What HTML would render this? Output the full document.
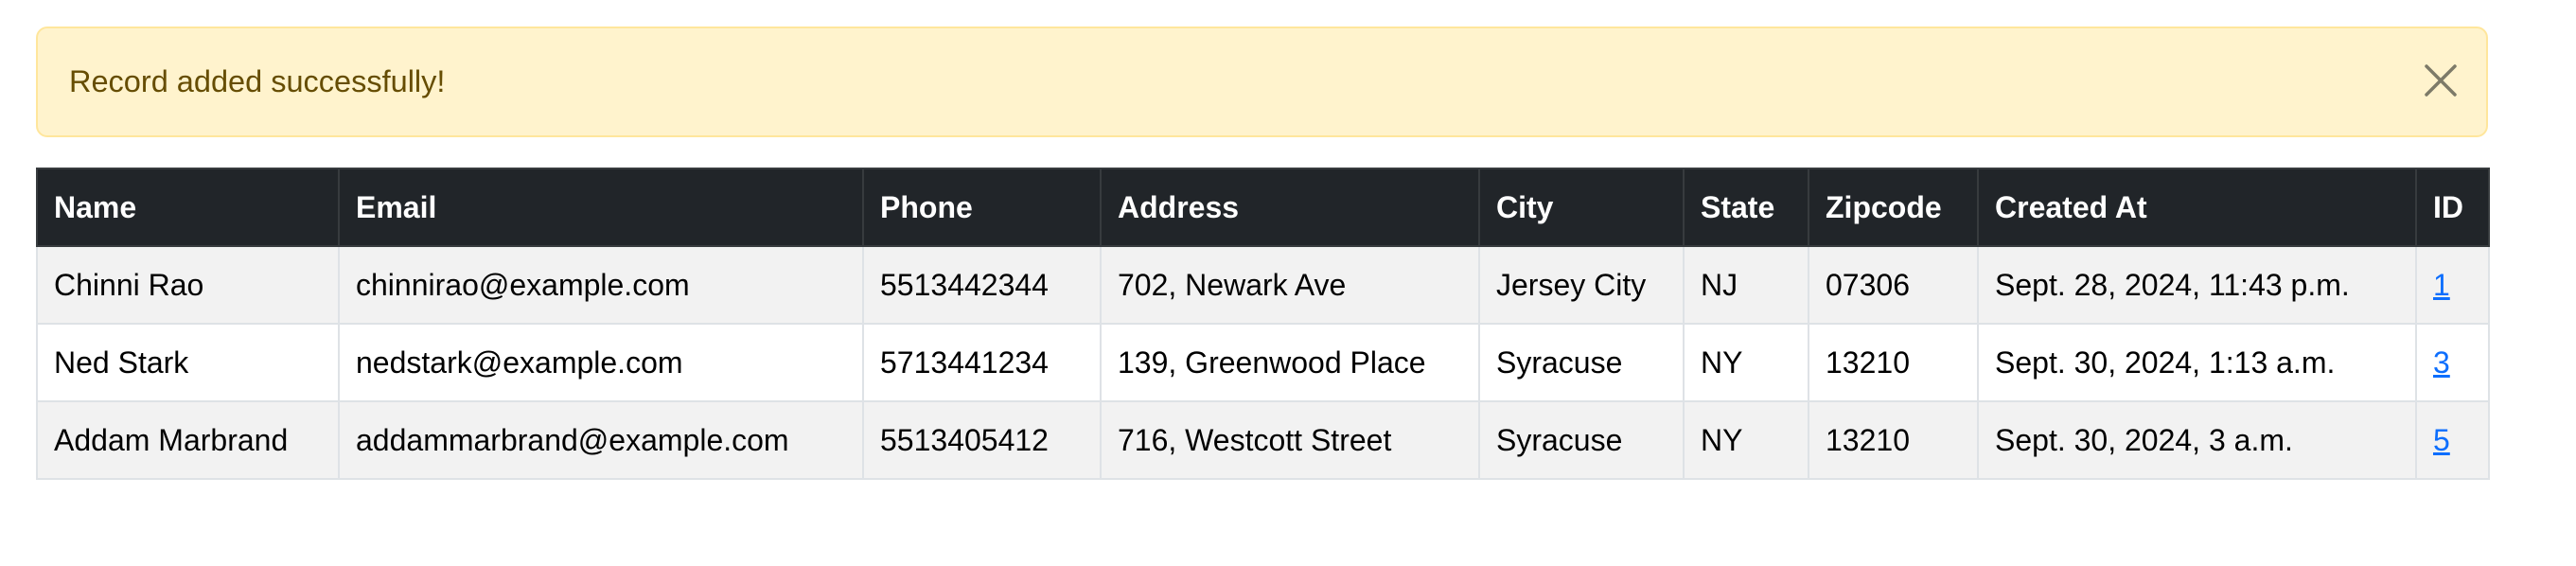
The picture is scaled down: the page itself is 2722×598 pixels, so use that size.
<!DOCTYPE html>
<html><head><meta charset="utf-8"><style>
html,body{margin:0;padding:0;background:#fff;width:2722px;height:598px;overflow:hidden;font-family:"Liberation Sans",sans-serif;}
.alert{position:absolute;left:38px;top:28px;height:113px;background:#fff3cd;border:2px solid #ffe69c;border-radius:12px;box-sizing:content-box;width:2587px;}
.alert span{position:absolute;left:33px;top:0;line-height:113px;font-size:32.5px;color:#664d03;}
.alert svg{position:absolute;left:2522px;top:38px;}
table{position:absolute;left:38px;top:177px;border-collapse:collapse;table-layout:fixed;width:2591px;font-size:32px;}
td,th{height:80px;padding:0 0 0 17px;text-align:left;border:2px solid #dee2e6;white-space:nowrap;overflow:hidden;}
th{background:#212529;color:#fff;font-weight:bold;border-color:#373b3e;}
tr.s td{background:#f2f2f2;}
a{color:#0d6efd;text-decoration:underline;}
</style></head><body>
<div class="alert"><span>Record added successfully!</span>
<svg width="34" height="34" viewBox="0 0 34 34"><path d="M2 2L32 32M32 2L2 32" stroke="#7d7a68" stroke-width="3.5" stroke-linecap="round"/></svg></div>
<table>
<colgroup><col style="width:319px"><col style="width:554px"><col style="width:251px"><col style="width:400px"><col style="width:216px"><col style="width:132px"><col style="width:179px"><col style="width:463px"><col style="width:77px"></colgroup>
<tr><th>Name</th><th>Email</th><th>Phone</th><th>Address</th><th>City</th><th>State</th><th>Zipcode</th><th>Created At</th><th>ID</th></tr>
<tr class="s"><td>Chinni Rao</td><td>chinnirao@example.com</td><td>5513442344</td><td>702, Newark Ave</td><td>Jersey City</td><td>NJ</td><td>07306</td><td>Sept. 28, 2024, 11:43 p.m.</td><td><a>1</a></td></tr>
<tr><td>Ned Stark</td><td>nedstark@example.com</td><td>5713441234</td><td>139, Greenwood Place</td><td>Syracuse</td><td>NY</td><td>13210</td><td>Sept. 30, 2024, 1:13 a.m.</td><td><a>3</a></td></tr>
<tr class="s"><td>Addam Marbrand</td><td>addammarbrand@example.com</td><td>5513405412</td><td>716, Westcott Street</td><td>Syracuse</td><td>NY</td><td>13210</td><td>Sept. 30, 2024, 3 a.m.</td><td><a>5</a></td></tr>
</table>
</body></html>
